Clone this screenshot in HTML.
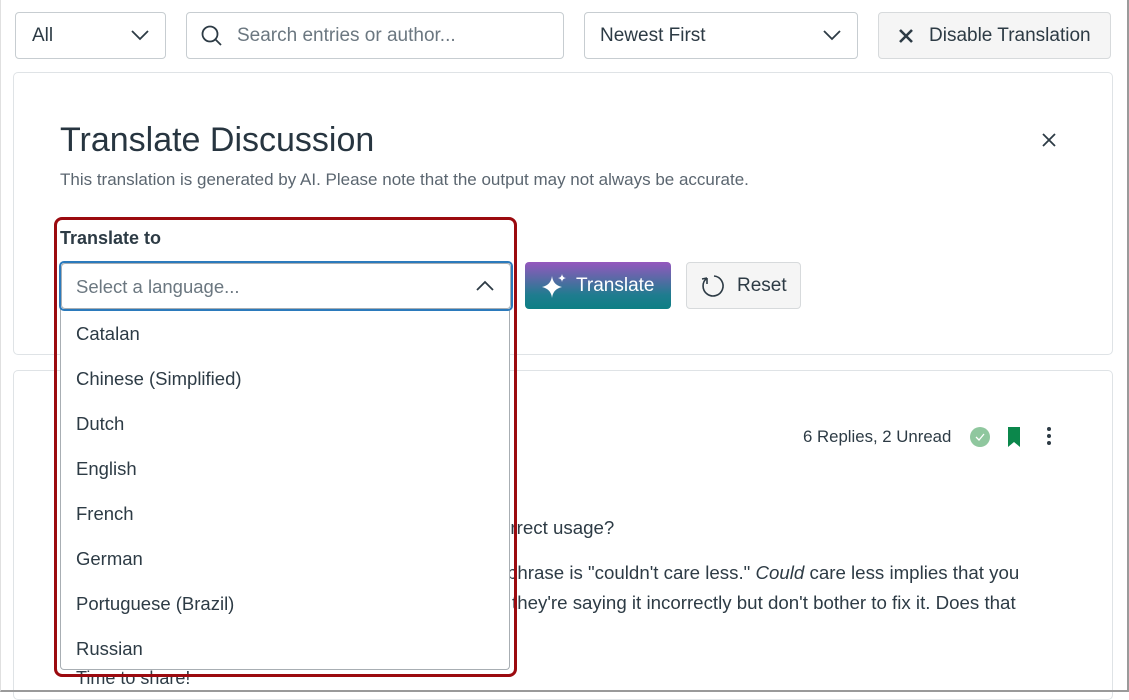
<!DOCTYPE html>
<html><head><style>
*{box-sizing:border-box;margin:0;padding:0}
body{width:1129px;height:693px;background:#fff;font-family:"Liberation Sans",sans-serif;color:#2d3b45;position:relative;overflow:hidden}
.frame{position:absolute;left:0;top:0;width:1129px;height:692px;border-right:2px solid #9a9a9a;border-bottom:2px solid #9a9a9a;border-left:1px solid #e0e0e0;z-index:10}
.abs{position:absolute}
.box{position:absolute;border:1px solid #c7cdd1;border-radius:4px;background:#fff}
.t{position:absolute;white-space:nowrap}
.card{position:absolute;border:1px solid #dfe3e6;border-radius:5px;background:#fff}
</style></head><body>
<div class="box" style="left:15px;top:12px;width:151px;height:47px"></div>
<div class="t" style="left:32px;top:25px;font-size:19px">All</div>
<svg class="abs" style="left:130px;top:28px" width="20" height="14"><path d="M2 3 L10 11 L18 3" fill="none" stroke="#2d3b45" stroke-width="1.8"/></svg>
<div class="box" style="left:186px;top:12px;width:378px;height:47px"></div>
<svg class="abs" style="left:200px;top:24px" width="24" height="24"><circle cx="10" cy="10" r="7.5" fill="none" stroke="#2d3b45" stroke-width="1.8"/><path d="M15.5 15.5 L21 21" stroke="#2d3b45" stroke-width="1.8"/></svg>
<div class="t" style="left:237px;top:25px;font-size:19px;color:#6b7780">Search entries or author...</div>
<div class="box" style="left:584px;top:12px;width:274px;height:47px"></div>
<div class="t" style="left:600px;top:25px;font-size:19px">Newest First</div>
<svg class="abs" style="left:822px;top:28px" width="20" height="14"><path d="M2 3 L10 11 L18 3" fill="none" stroke="#2d3b45" stroke-width="1.8"/></svg>
<div class="box" style="left:878px;top:12px;width:233px;height:47px;background:#f5f5f5;border-color:#d7dadc"></div>
<svg class="abs" style="left:897px;top:27px" width="18" height="18"><path d="M3 3 L15 15 M15 3 L3 15" stroke="#2d3b45" stroke-width="2.6"/></svg>
<div class="t" style="left:929px;top:25px;font-size:19px">Disable Translation</div>

<div class="card" style="left:13px;top:72px;width:1100px;height:283px"></div>
<div class="t" style="left:60px;top:121px;font-size:34px;color:#273540">Translate Discussion</div>
<svg class="abs" style="left:1041px;top:132px" width="16" height="16"><path d="M2 2 L14 14 M14 2 L2 14" stroke="#2d3b45" stroke-width="1.8"/></svg>
<div class="t" style="left:60px;top:170px;font-size:17px;color:#5b6670">This translation is generated by AI. Please note that the output may not always be accurate.</div>
<div class="t" style="left:60px;top:228px;font-size:18px;font-weight:bold">Translate to</div>
<div class="abs" style="left:525px;top:262px;width:146px;height:47px;border-radius:4px;background:linear-gradient(#9557be,#1f7c8f 70%,#0d7f84)"></div>
<svg class="abs" style="left:540px;top:272px" width="30" height="28"><path d="M12 4 Q13 13 22 15 Q13 17 12 26 Q11 17 2 15 Q11 13 12 4Z" fill="#fff"/><path d="M22 2 Q22.5 5.5 26 6 Q22.5 6.5 22 10 Q21.5 6.5 18 6 Q21.5 5.5 22 2Z" fill="#fff"/></svg>
<div class="t" style="left:576px;top:275px;font-size:19px;color:#fff">Translate</div>
<div class="box" style="left:686px;top:262px;width:115px;height:47px;background:#f5f5f5;border-color:#d7dadc"></div>
<svg class="abs" style="left:700px;top:273px" width="26" height="26"><path d="M7 5 A10 10 0 1 0 14 3" fill="none" stroke="#2d3b45" stroke-width="1.6"/><path d="M7 5 L7 11 M7 5 L2 6" stroke="#2d3b45" stroke-width="1.6" fill="none"/></svg>
<div class="t" style="left:737px;top:275px;font-size:19px">Reset</div>

<div class="card" style="left:13px;top:370px;width:1100px;height:330px"></div>
<div class="t" style="left:803px;top:427px;font-size:16.8px">6 Replies, 2 Unread</div>
<svg class="abs" style="left:969px;top:426px" width="22" height="22"><circle cx="11" cy="11" r="10" fill="#8fc79e"/><path d="M7 11 L10 14 L15 8" fill="none" stroke="#fff" stroke-width="1.3"/></svg>
<svg class="abs" style="left:1006px;top:426px" width="16" height="22"><path d="M2 1 H14 V21 L8 16 L2 21Z" fill="#0b874b"/></svg>
<svg class="abs" style="left:1043px;top:426px" width="12" height="22"><circle cx="6" cy="3" r="2" fill="#2d3b45"/><circle cx="6" cy="10" r="2" fill="#2d3b45"/><circle cx="6" cy="17" r="2" fill="#2d3b45"/></svg>
<div class="t" style="left:500px;top:517px;font-size:18.7px">orrect usage?</div>
<div class="t" style="left:507px;top:562px;font-size:18.7px">phrase is "couldn't care less." <i>Could</i> care less implies that you</div>
<div class="t" style="left:512px;top:592px;font-size:18.7px">they're saying it incorrectly but don't bother to fix it. Does that</div>
<div class="t" style="left:76px;top:668px;font-size:18px">Time to share!</div>

<div class="abs" style="left:60px;top:309px;width:450px;height:361px;background:#fff;border:1px solid #a8aeb3;border-top:none;border-radius:0 0 4px 4px"></div>
<div class="box" style="left:59px;top:261px;width:454px;height:50px;border:2px solid #2b7abc;border-radius:5px"></div>
<div class="box" style="left:61px;top:263px;width:450px;height:46px;border-color:#a8aeb3"></div>
<div class="t" style="left:76px;top:276px;font-size:18.5px;color:#6b7780">Select a language...</div>
<svg class="abs" style="left:475px;top:279px" width="20" height="14"><path d="M2 11 L10 3 L18 11" fill="none" stroke="#2d3b45" stroke-width="1.8"/></svg>
<div class="t" style="left:76px;top:323px;font-size:18.5px">Catalan</div>
<div class="t" style="left:76px;top:368px;font-size:18.5px">Chinese (Simplified)</div>
<div class="t" style="left:76px;top:413px;font-size:18.5px">Dutch</div>
<div class="t" style="left:76px;top:458px;font-size:18.5px">English</div>
<div class="t" style="left:76px;top:503px;font-size:18.5px">French</div>
<div class="t" style="left:76px;top:548px;font-size:18.5px">German</div>
<div class="t" style="left:76px;top:593px;font-size:18.5px">Portuguese (Brazil)</div>
<div class="t" style="left:76px;top:638px;font-size:18.5px">Russian</div>

<div class="abs" style="left:54px;top:217px;width:463px;height:460px;border:3px solid #9b0a0f;border-radius:8px"></div>
<div class="frame"></div>
</body></html>
